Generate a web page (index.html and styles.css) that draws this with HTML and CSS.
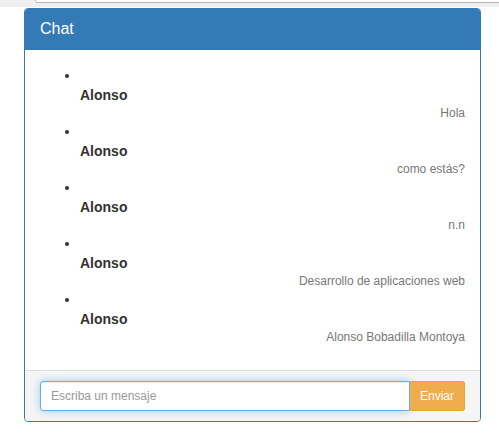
FILE: index.html
```html
<!DOCTYPE html>
<html lang="es">
<head>
<meta charset="utf-8">
<title>Chat</title>
<link rel="stylesheet" href="styles.css">
</head>
<body>
<div class="topbar"><div class="topbar-field"></div></div>
<div class="panel">
  <div class="panel-heading">Chat</div>
  <div class="panel-body">
    <ul class="messages">
      <li><strong class="author">Alonso</strong><div class="text">Hola</div></li>
      <li><strong class="author">Alonso</strong><div class="text">como estás?</div></li>
      <li><strong class="author">Alonso</strong><div class="text">n.n</div></li>
      <li><strong class="author">Alonso</strong><div class="text">Desarrollo de aplicaciones web</div></li>
      <li><strong class="author">Alonso</strong><div class="text">Alonso Bobadilla Montoya</div></li>
    </ul>
  </div>
  <div class="panel-footer">
    <div class="input-group">
      <input class="form-control" type="text" placeholder="Escriba un mensaje" autofocus>
      <button class="btn-warning" type="button">Enviar</button>
    </div>
  </div>
</div>
</body>
</html>
```
FILE: styles.css
```css
html, body {
  margin: 0;
  padding: 0;
  background: #fff;
}
body {
  font-family: "Liberation Sans", Arial, Helvetica, sans-serif;
  font-size: 14px;
  line-height: 20px;
  color: #333;
}
.topbar {
  height: 7px;
  background: #efefef;
  padding-left: 35px;
}
.topbar-field {
  height: 2px;
  background: #fff;
  border-bottom: 1px solid #b5b5b5;
  border-left: 1px solid #c8c8c8;
  border-bottom-left-radius: 3px;
}
.panel {
  margin: 1px 0 0 24px;
  width: 457px;
  box-sizing: border-box;
  border: 1px solid #337ab7;
  border-radius: 4px;
  background: #fff;
  overflow: hidden;
}
.panel-heading {
  background: #337ab7;
  color: #fff;
  font-size: 16px;
  line-height: 20px;
  padding: 10px 15px;
  border-bottom: 1px solid #337ab7;
}
.panel-body {
  padding: 15px;
}
.messages {
  margin: 0 0 10px;
  padding-left: 40px;
  list-style: disc;
}
.messages li::before {
  content: "\200b";
  display: block;
  height: 20px;
}
.author {
  display: block;
  font-weight: bold;
  line-height: 20px;
}
.text {
  text-align: right;
  font-size: 12px;
  line-height: 16px;
  color: #777;
}
.panel-footer {
  background: #f5f5f5;
  border-top: 1px solid #ddd;
  padding: 10px 15px;
}
.input-group {
  display: flex;
}
.form-control {
  flex: 1;
  min-width: 0;
  height: 30px;
  box-sizing: border-box;
  padding: 5px 10px;
  font-family: inherit;
  font-size: 12px;
  color: #555;
  background: #fff;
  border: 1px solid #66afe9;
  border-radius: 3px 0 0 3px;
  outline: 0;
  box-shadow: inset 0 1px 1px rgba(0,0,0,.075), 0 0 8px rgba(102,175,233,.6);
}
.form-control::placeholder {
  color: #999;
}
.btn-warning {
  height: 30px;
  box-sizing: border-box;
  padding: 5px 10px;
  font-family: inherit;
  font-size: 12px;
  line-height: 18px;
  color: #fff;
  background: #f0ad4e;
  border: 1px solid #eea236;
  border-left: 0;
  border-radius: 0 3px 3px 0;
  cursor: pointer;
}
```
